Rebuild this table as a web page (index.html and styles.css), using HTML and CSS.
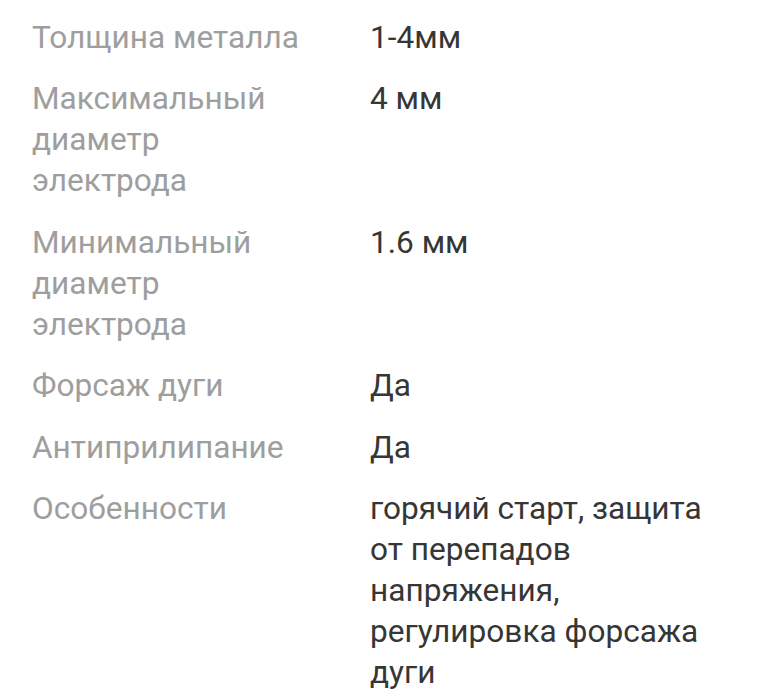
FILE: index.html
```html
<!DOCTYPE html>
<html lang="ru">
<head>
<meta charset="utf-8">
<link rel="stylesheet" href="styles.css">
</head>
<body>
<dl class="specs">
  <dt class="label">Толщина металла</dt><dd class="value">1-4мм</dd>
  <dt class="label">Максимальный диаметр электрода</dt><dd class="value">4 мм</dd>
  <dt class="label">Минимальный диаметр электрода</dt><dd class="value">1.6 мм</dd>
  <dt class="label">Форсаж дуги</dt><dd class="value">Да</dd>
  <dt class="label">Антиприлипание</dt><dd class="value">Да</dd>
  <dt class="label">Особенности</dt><dd class="value">горячий старт, защита от перепадов напряжения, регулировка форсажа дуги</dd>
</dl>
</body>
</html>
```
FILE: styles.css
```css
html, body {
  margin: 0;
  padding: 0;
  background: #ffffff;
}
.specs {
  margin: 0;
  padding: 16.5px 54px 0 32px;
  display: grid;
  grid-template-columns: 338px 1fr;
  row-gap: 20.5px;
  font-family: Roboto, "Noto Sans", sans-serif;
  font-size: 31.6px;
  line-height: 41px;
}
.label {
  margin: 0;
  color: #9e9e9e;
  padding-right: 58px;
}
.value {
  margin: 0;
  color: #363636;
}
```
